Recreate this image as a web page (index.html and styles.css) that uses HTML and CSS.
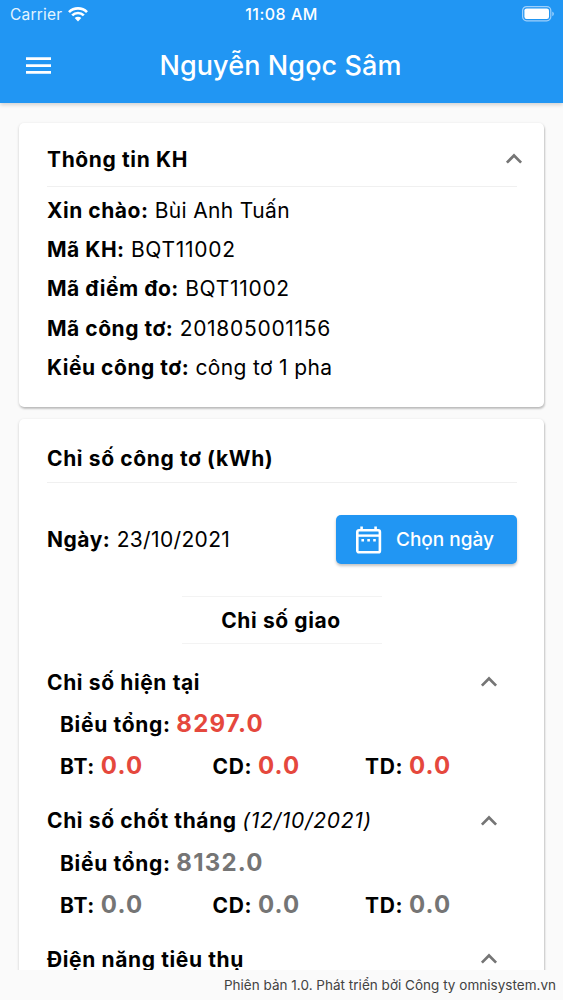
FILE: index.html
```
<!doctype html>
<html lang="vi">
<head>
    <meta charset="UTF-8" />
    <title>Nguyễn Ngọc Sâm</title>
    <link rel="stylesheet" href="styles.css">
</head>
<body>
    <svg width="0" height="0" class="defs">
        <symbol id="icUp" viewBox="0 0 18 12"><path d="M1.9 9.6 9 2.5l7.1 7.1" fill="none" stroke="#757575" stroke-width="2.7"/></symbol>
    </svg>
    <div id="header">
        <div id="statusBar">
            <div class="carrier">
                <span>Carrier</span>
                <svg width="20" height="16" viewBox="0 0 20 16">
                    <g fill="none" stroke="#fff" stroke-width="2.7">
                        <path d="M1 6.1a12.8 12.8 0 0 1 18 0"/>
                        <path d="M4.2 9.4a8.2 8.2 0 0 1 11.6 0"/>
                    </g>
                    <path d="M10 15.6 6.7 12.1a4.7 4.7 0 0 1 6.6 0z" fill="#fff"/>
                </svg>
            </div>
            <div class="clock">11:08 AM</div>
            <svg class="battery" width="33" height="16" viewBox="0 0 33 16">
                <rect x=".6" y=".6" width="28.2" height="14.2" rx="4" fill="none" stroke="#9fd0fb" stroke-width="1.2"/>
                <rect x="2.4" y="2.4" width="24.6" height="10.6" rx="2.2" fill="#fff"/>
                <path d="M30.3 5.4v4.8q1.6-.7 1.6-2.4t-1.6-2.4z" fill="#9fd0fb"/>
            </svg>
        </div>
        <div id="appBar">
            <svg class="menu" width="26" height="18" viewBox="0 0 26 18"><path d="M0 1.6h25M0 8.6h25M0 15.4h25" stroke="#fff" stroke-width="2.7"/></svg>
            <h1>Nguyễn Ngọc Sâm</h1>
        </div>
    </div>

    <div id="content">
        <div class="card info">
            <div class="cardTitle">
                <h2>Thông tin KH</h2>
                <svg class="up" width="18" height="12"><use href="#icUp"/></svg>
            </div>
            <p><b>Xin chào:</b> Bùi Anh Tuấn</p>
            <p><b>Mã KH:</b> <span class="code">BQT11002</span></p>
            <p><b>Mã điểm đo:</b> <span class="code">BQT11002</span></p>
            <p><b>Mã công tơ:</b> <span class="code">201805001156</span></p>
            <p><b>Kiểu công tơ:</b> công tơ 1 pha</p>
        </div>

        <div class="card meter">
            <div class="cardTitle">
                <h2>Chỉ số công tơ (kWh)</h2>
            </div>
            <div class="dateRow">
                <p><b>Ngày:</b> 23/10/2021</p>
                <button id="btnDate">
                    <svg width="26" height="28" viewBox="0 0 26 28">
                        <rect x="1.3" y="4.3" width="22.6" height="22" rx="1.6" fill="none" stroke="#fff" stroke-width="2.6"/>
                        <path d="M1 9.6h23" stroke="#fff" stroke-width="2.4"/>
                        <path d="M5.6.6v4M19.6.6v4" stroke="#fff" stroke-width="2.6"/>
                        <path d="M5.4 14.2H8M11.3 14.2h2.6M17.2 14.2h2.6" stroke="#fff" stroke-width="2.6"/>
                    </svg>
                    <span>Chọn ngày</span>
                </button>
            </div>
            <h2 class="group">Chỉ số giao</h2>

            <div class="reading current">
                <div class="readingTitle"><h3>Chỉ số hiện tại</h3><svg class="up" width="18" height="12"><use href="#icUp"/></svg></div>
                <div class="total">Biểu tổng: <b>8297.0</b></div>
                <div class="parts">
                    <span>BT: <b>0.0</b></span>
                    <span>CD: <b>0.0</b></span>
                    <span>TD: <b>0.0</b></span>
                </div>
            </div>
            <div class="reading">
                <div class="readingTitle"><h3>Chỉ số chốt tháng <i>(12/10/2021)</i></h3><svg class="up" width="18" height="12"><use href="#icUp"/></svg></div>
                <div class="total">Biểu tổng: <b>8132.0</b></div>
                <div class="parts">
                    <span>BT: <b>0.0</b></span>
                    <span>CD: <b>0.0</b></span>
                    <span>TD: <b>0.0</b></span>
                </div>
            </div>
            <div class="reading">
                <div class="readingTitle"><h3>Điện năng tiêu thụ</h3><svg class="up" width="18" height="12"><use href="#icUp"/></svg></div>
            </div>
        </div>
    </div>

    <div id="footer">Phiên bản 1.0. Phát triển bởi Công ty omnisystem.vn</div>
</body>
</html>
```

FILE: styles.css
```
* {
    box-sizing: border-box;
}
html, body {
    height: 100%;
}
body {
    margin: 0;
    display: flex;
    flex-direction: column;
    overflow: hidden;
    background: #fafafa;
    color: #000;
    font-family: Inter, Roboto, sans-serif;
    font-size: 21px;
}
h1, h2, h3, p {
    margin: 0;
}
.defs {
    display: none;
}
#header {
    flex: none;
    height: 103px;
    background: #2196f3;
    color: #fff;
    box-shadow: 0 2px 4px rgba(0,0,0,0.16);
    z-index: 1;
}
#statusBar {
    display: grid;
    grid-template-columns: 1fr auto 1fr;
    align-items: center;
    height: 28px;
    padding: 0 8px 0 10px;
    font-size: 15.5px;
}
.carrier {
    display: flex;
    align-items: center;
    gap: 6px;
    color: #e3f4ff;
    letter-spacing: 0.2px;
}
.clock {
    padding-right: 2px;
    font-size: 16px;
    font-weight: 500;
    letter-spacing: 0.5px;
}
.battery {
    justify-self: end;
}
#appBar {
    display: grid;
    grid-template-columns: 75px 1fr 77px;
    align-items: center;
    height: 75px;
}
#appBar .menu {
    margin-left: 26px;
}
#appBar h1 {
    text-align: center;
    font-size: 27px;
    font-weight: 500;
    letter-spacing: 0.1px;
}
#content {
    flex: 1;
    min-height: 0;
    overflow: hidden;
    padding: 20px 19px 0 19px;
}
.card {
    background: #fff;
    border-radius: 5px;
    padding: 0 27px 0 28px;
    box-shadow: 0 1px 3px rgba(0,0,0,0.18), 1px 2px 2px rgba(0,0,0,0.14);
}
.info {
    height: 284px;
    margin-bottom: 12px;
}
.cardTitle {
    display: flex;
    justify-content: space-between;
    align-items: center;
    height: 64px;
    padding-top: 9px;
    border-bottom: 1px solid #f0f0f0;
}
.meter .cardTitle {
    padding-top: 15px;
}
h2, h3 {
    font-size: 21px;
    font-weight: 700;
    letter-spacing: 0.62px;
}
b {
    font-weight: 700;
    letter-spacing: 0.52px;
}
p {
    letter-spacing: 0.35px;
}
.code {
    letter-spacing: 0.7px;
}
.info .up {
    margin-right: -6px;
}
.info .cardTitle {
    margin-bottom: 3.5px;
}
.info p {
    line-height: 39.4px;
}
.dateRow {
    display: flex;
    justify-content: space-between;
    align-items: center;
    height: 113px;
}
#btnDate {
    display: flex;
    align-items: center;
    gap: 14px;
    width: 181px;
    height: 49px;
    padding: 0 0 0 20px;
    border: none;
    border-radius: 5px;
    background: #2196f3;
    color: #fff;
    font-family: inherit;
    font-size: 19px;
    font-weight: 500;
    box-shadow: 0 2px 3px rgba(0,0,0,0.24);
}
.group {
    width: 200px;
    height: 48px;
    margin: 0 auto 18px auto;
    padding-right: 2px;
    line-height: 47px;
    text-align: center;
    border-top: 1px solid #f3f3f3;
    border-bottom: 1px solid #f3f3f3;
}
.reading {
    height: 138.5px;
    font-weight: 700;
    letter-spacing: 0.68px;
}
.readingTitle {
    display: flex;
    justify-content: space-between;
    align-items: center;
    height: 40px;
    margin-bottom: 1px;
    padding-right: 19px;
}
.readingTitle i {
    font-weight: 400;
    letter-spacing: 0.7px;
}
.total {
    height: 42px;
    line-height: 42px;
    padding-left: 13px;
}
.parts {
    display: grid;
    grid-template-columns: 152.5px 152.5px 1fr;
    line-height: 42px;
    padding-left: 13px;
}
.reading b {
    font-size: 24px;
    font-weight: 650;
    color: #757575;
    letter-spacing: 1.2px;
}
.reading.current b {
    color: #e5483d;
}
#footer {
    flex: none;
    height: 30px;
    line-height: 30px;
    padding-right: 7px;
    text-align: right;
    font-size: 13.5px;
    letter-spacing: 0.02px;
    color: #424242;
}
```
